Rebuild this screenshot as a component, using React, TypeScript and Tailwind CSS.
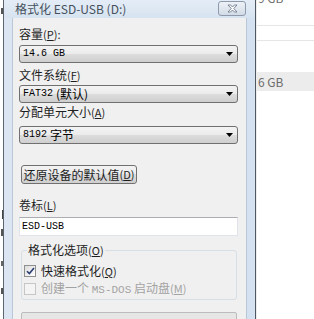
import type { ReactNode } from "react"

const btnBg =
  "bg-[linear-gradient(#f3f3f3_0%,#ebebeb_50%,#dddddd_50%,#cfcfcf_100%)]"

function Mono({ children, className = "text-[10px]" }: { children: ReactNode; className?: string }) {
  return <span className={`font-['Liberation_Mono',monospace] ${className}`}>{children}</span>
}

function Label({ text, k, tail = "", className = "" }: { text: string; k: string; tail?: string; className?: string }) {
  return (
    <div className={`flex h-[14px] items-center text-[12px] leading-[14px] text-[#1e1e1e] ${className}`}>
      {text}
      <span className="text-[11px]">
        (<u>{k}</u>){tail}
      </span>
    </div>
  )
}

function Combo({ children, className = "" }: { children: ReactNode; className?: string }) {
  return (
    <div
      className={`flex h-[18px] items-center rounded-[3px] border border-[#707070] ${btnBg} pl-[3px] pr-[4px] ${className}`}
    >
      <div className="flex flex-1 items-center gap-[3px] whitespace-nowrap text-[12px] leading-none text-black">
        {children}
      </div>
      <svg width="7" height="4" viewBox="0 0 7 4">
        <path d="M0 0h7L3.5 4z" fill="#000" />
      </svg>
    </div>
  )
}

function Check({ checked, disabled, children }: { checked?: boolean; disabled?: boolean; children: ReactNode }) {
  return (
    <div className="flex h-[14px] items-center gap-[5px]">
      <div
        className={`flex h-[12px] w-[12px] items-center justify-center border ${
          disabled ? "border-[#c6c6c6] bg-[#f4f4f4]" : "border-[#8e8f8f] bg-[linear-gradient(135deg,#dcdcdc,#ffffff)]"
        }`}
      >
        {checked && (
          <svg width="9" height="8" viewBox="0 0 9 8">
            <path d="M1 4.2 3.4 6.6 8 1" fill="none" stroke="#2a3d74" strokeWidth="1.6" />
          </svg>
        )}
      </div>
      <div className={`whitespace-nowrap text-[12px] leading-[14px] ${disabled ? "text-[#a3a3a3]" : "text-[#1e1e1e]"}`}>
        {children}
      </div>
    </div>
  )
}

export default function App() {
  return (
    <div className="flex h-[319px] w-[314px] overflow-hidden bg-white font-['Noto_Sans_CJK_SC',sans-serif]">
      {/* background window, left edge: only slivers of its text show */}
      <div className="flex w-[3px] flex-col items-end">
        <div className="mt-[8px] h-[6px] w-[2px] bg-[#555]" />
        <div className="mt-[196px] h-[9px] w-[1px] bg-[#444]" />
        <div className="mt-[10px] h-[7px] w-[2px] bg-[#555]" />
        <div className="mt-[25px] h-[5px] w-[2px] bg-[#666]" />
        <div className="mt-[22px] h-[6px] w-[2px] bg-[#555]" />
      </div>
      <div className="w-px bg-[#5c6470]" />

      {/* dialog */}
      <div className="flex w-[251px] flex-col bg-[#d8e4f1]">
        <div className="flex h-[20px] items-center bg-gradient-to-b from-[#e4edf7] to-[#d7e3f0] pl-[11px] pr-[9px]">
          <div className="flex-1 whitespace-nowrap text-[12px] text-[#46505c]">格式化 ESD-USB (D:)</div>
          <div className="mt-[-2px] flex h-[15px] w-[28px] items-center justify-center rounded-[3px] border border-[#8c9aab] bg-gradient-to-b from-[#eef2f7] to-[#d2dbe6]">
            <svg width="11" height="9" viewBox="0 0 11 9">
              <path
                d="M1 1h2.6L5.5 3 7.4 1H10L6.8 4.5 10 8H7.4L5.5 6 3.6 8H1l3.2-3.5z"
                fill="#fdfdfd"
                stroke="#6f7c8c"
                strokeWidth="0.9"
                strokeLinejoin="round"
              />
            </svg>
          </div>
        </div>

        <div className="flex flex-1">
          <div className="w-[9px] border-r border-[#b9c8d8] bg-[#dbe6f2]" />
          <div className="flex w-[233px] flex-col bg-[#f0f0f0] pl-[6px] pr-[8px]">
            <Label text="容量" k="P" tail=":" className="mt-[9px]" />
            <Combo className="mt-[4px]">
              <Mono>14.6 GB</Mono>
            </Combo>

            <Label text="文件系统" k="F" className="mt-[5px]" />
            <Combo className="mt-[3px]">
              <Mono>FAT32</Mono>
              <span className="text-[12px]">(默认)</span>
            </Combo>

            <Label text="分配单元大小" k="A" className="mt-[2px]" />
            <Combo className="mt-[7px]">
              <Mono>8192</Mono>
              <span className="text-[12px]">字节</span>
            </Combo>

            <div
              className={`ml-[2px] mt-[21px] flex h-[19px] w-[116px] items-center justify-center rounded-[3px] border border-[#707070] ${btnBg} text-[12px] leading-none text-[#1e1e1e]`}
            >
              还原设备的默认值<span className="text-[11px]">(<u>D</u>)</span>
            </div>

            <Label text="卷标" k="L" className="mt-[14px]" />
            <div className="mt-[5px] flex h-[19px] items-center border border-[#dfe3ea] border-t-[#abadb3] bg-white pl-[2px]">
              <Mono>ESD-USB</Mono>
            </div>

            <div className="relative ml-[2px] mr-px mt-[14px] flex h-[50px] flex-col rounded-[3px] border border-[#d5dfe5] pl-[2px]">
              <div className="absolute left-[5px] top-[-8px] bg-[#f0f0f0] px-[1px] text-[12px] leading-[14px] text-[#1e1e1e]">
                格式化选项<span className="text-[11px]">(<u>O</u>)</span>
              </div>
              <div className="mt-[13px]">
                <Check checked>
                  快速格式化<span className="text-[11px]">(<u>Q</u>)</span>
                </Check>
              </div>
              <div className="mt-[4px]">
                <Check disabled>
                  创建一个 <Mono className="text-[11px]">MS-DOS</Mono> 启动盘<span className="text-[11px]">(<u>M</u>)</span>
                </Check>
              </div>
            </div>

            <div className="ml-[2px] mr-px mt-[12px] h-[15px] rounded-[2px] border border-[#bcbcbc] bg-[#e6e6e6]" />
          </div>
          <div className="w-[8px] border-l border-[#b9c8d8] bg-[#d3e1f0]" />
        </div>
      </div>
      <div className="w-px bg-[#4e5661]" />

      {/* background window, right side */}
      <div className="flex flex-1 flex-col border-l border-[#ececec] bg-white text-[12px] leading-[14px] text-[#6d6d6d]">
        <div className="mt-[-9px] h-[14px] pl-[1px]">9 GB</div>
        <div className="mt-[20px] h-px bg-[#e6e6e6]" />
        <div className="mt-[14px] h-px bg-[#e6e6e6]" />
        <div className="mt-[31px] flex h-[19px] items-center bg-[#ececec] pl-[1px]">6 GB</div>
        <div className="flex-1" />
      </div>
    </div>
  )
}
